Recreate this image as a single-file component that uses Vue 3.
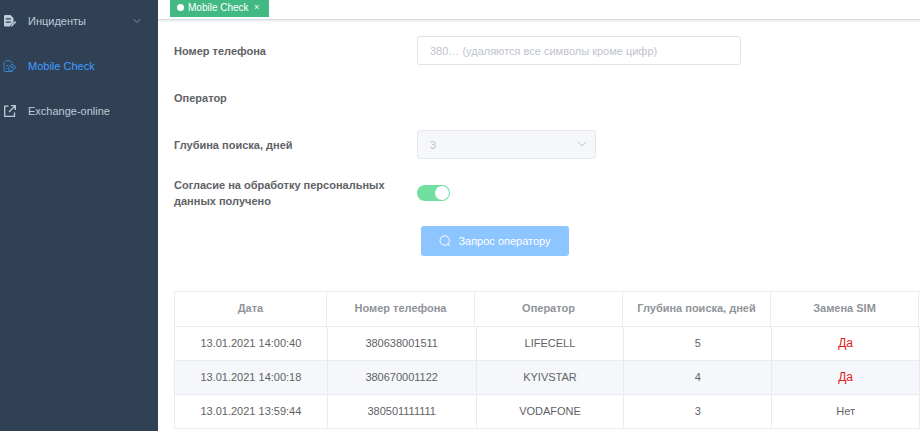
<script setup>
import { ref } from 'vue'

const phone = ref('')
const depth = ref('3')
const consent = ref(true)

const columns = ['Дата', 'Номер телефона', 'Оператор', 'Глубина поиска, дней', 'Замена SIM']
const rows = [
  { date: '13.01.2021 14:00:40', phone: '380638001511', operator: 'LIFECELL', depth: 5, replaced: true },
  { date: '13.01.2021 14:00:18', phone: '380670001122', operator: 'KYIVSTAR', depth: 4, replaced: true },
  { date: '13.01.2021 13:59:44', phone: '380501111111', operator: 'VODAFONE', depth: 3, replaced: false },
]
</script>

<template>
  <div class="layout">
    <nav class="sidebar">
      <a class="item" href="#incidents">
        <svg class="icon" viewBox="0 0 14 14">
          <path fill="currentColor" fill-rule="evenodd" d="M2 1h5.500L10.500 4v4.200L7 11.700V12.500H2a1 1 0 0 1-1-1V2a1 1 0 0 1 1-1zM2.800 4.300v1.200h5V4.300zM2.800 7.600v1.200h5V7.600z" />
          <path fill="none" stroke="currentColor" stroke-width="1.500" d="M8 12.300l4.700-4.700" />
        </svg>
        <span>Инциденты</span>
        <svg class="arrow" viewBox="0 0 8 8">
          <path fill="none" stroke="currentColor" d="M.7 2.200L4 5.500l3.300-3.300" />
        </svg>
      </a>
      <a class="item active" href="#mobile-check">
        <svg class="icon" viewBox="0 0 14 14" fill="none" stroke="currentColor">
          <path d="M9.500 4.500L7 1.700H3L1 3.700v7.800a1 1 0 0 0 1 1h7.500M3 6.500h2.500M3 9.500h1.500" />
          <path d="M5.500 8.500L9 5l4 3.300-3.800 3.400-3.200.2zM7.600 6.700l3.200 3.200M7.500 9.500l2-2" />
        </svg>
        <span>Mobile Check</span>
      </a>
      <a class="item" href="#exchange-online">
        <svg class="icon" viewBox="0 0 14 14" fill="none" stroke="currentColor" stroke-width="1.300">
          <path d="M5.500 2.200H1.700v10.100h9.800V8.500M8 1.700h4.300V6M12 2L6 8" />
        </svg>
        <span>Exchange-online</span>
      </a>
    </nav>

    <div class="content">
      <header class="tabs">
        <div class="tab">
          <i class="dot"></i>
          <a href="#mobile-check">Mobile Check</a>
          <button class="close" type="button">×</button>
        </div>
      </header>

      <main class="page">
        <form @submit.prevent>
          <div class="fields">
            <label for="phone">Номер телефона</label>
            <input id="phone" v-model="phone" class="control" type="text" placeholder="380… (удаляются все символы кроме цифр)" />

            <span class="label">Оператор</span>
            <span></span>

            <label for="depth">Глубина поиска, дней</label>
            <div class="select">
              <select id="depth" v-model="depth" class="control" disabled>
                <option>3</option>
              </select>
              <svg class="caret" viewBox="0 0 10 10">
                <path fill="none" stroke="currentColor" d="M1 3l4 4 4-4" />
              </svg>
            </div>

            <label for="consent">Согласие на обработку персональных данных получено</label>
            <input id="consent" v-model="consent" class="switch" type="checkbox" />
          </div>

          <div class="actions">
            <button class="submit" type="submit" disabled>
              <svg viewBox="0 0 12 12" fill="none" stroke="currentColor">
                <circle cx="5.700" cy="5.500" r="4.700" />
                <path d="M9 9l2 2.200" />
              </svg>
              <span>Запрос оператору</span>
            </button>
          </div>
        </form>

        <table>
          <thead>
            <tr>
              <th v-for="name in columns" :key="name" scope="col">{{ name }}</th>
            </tr>
          </thead>
          <tbody>
            <tr v-for="row in rows" :key="row.date">
              <td>{{ row.date }}</td>
              <td>{{ row.phone }}</td>
              <td>{{ row.operator }}</td>
              <td>{{ row.depth }}</td>
              <td :class="{ alert: row.replaced }">{{ row.replaced ? 'Да' : 'Нет' }}</td>
            </tr>
          </tbody>
        </table>
      </main>
    </div>
  </div>
</template>

<style>
body {
  margin: 0;
  background: #fff;
}
</style>

<style scoped>
.layout,
.layout * {
  box-sizing: border-box;
}

.layout {
  display: flex;
  min-height: 100vh;
  font-family: "Liberation Sans", Arial, sans-serif;
  font-size: 11px;
  color: #606266;
}

input,
select,
button {
  font: inherit;
}

.sidebar {
  display: flex;
  flex-direction: column;
  flex: 0 0 158px;
  gap: 30px;
  padding: 13px 17px 0 3px;
  background: #304156;
}

.item {
  display: flex;
  align-items: center;
  height: 15px;
  font-size: 11px;
  color: #bfcbd9;
  text-decoration: none;
}

.item.active {
  color: #409eff;
}

.icon {
  width: 14px;
  height: 14px;
  margin-right: 11px;
}

.active .icon {
  opacity: 0.7;
}

.arrow {
  width: 8px;
  height: 8px;
  margin-left: auto;
  color: #8290a0;
}

.content {
  flex: 1;
  min-width: 0;
}

.tabs {
  height: 20px;
  padding-left: 12px;
  border-bottom: 1px solid #d8dce5;
  box-shadow: 0 1px 2px rgba(0, 0, 0, 0.1);
}

.tab {
  display: inline-flex;
  align-items: center;
  height: 17px;
  padding: 0 7px 3px;
  background: #42b983;
  color: #fff;
  vertical-align: top;
}

.tab a {
  color: inherit;
  font-size: 10px;
  text-decoration: none;
}

.dot {
  width: 7px;
  height: 7px;
  margin-right: 4px;
  border-radius: 50%;
  background: #fff;
}

.close {
  width: 10px;
  margin-left: 3px;
  padding: 0;
  border: 0;
  background: none;
  color: inherit;
  font-size: 9px;
  line-height: 12px;
}

.page {
  padding: 16px 0 0 16px;
}

.fields {
  display: grid;
  grid-template-columns: 227px minmax(0, 324px);
  grid-auto-rows: minmax(29px, auto);
  gap: 18px 16px;
  align-items: center;
}

label,
.label {
  font-size: 11px;
  font-weight: bold;
  line-height: 16px;
}

.control {
  display: block;
  width: 100%;
  height: 29px;
  padding: 0 12px;
  border: 1px solid #e0e3ea;
  border-radius: 3px;
  background: #fff;
  color: #606266;
  outline: none;
}

.control::placeholder {
  color: #c0c4cc;
  opacity: 1;
}

.select {
  position: relative;
  max-width: 179px;
}

.select .control {
  appearance: none;
  background: #f5f7fa;
  border-color: #e4e7ed;
  color: #c0c4cc;
  opacity: 1;
}

.caret {
  position: absolute;
  top: 9px;
  right: 9px;
  width: 10px;
  height: 10px;
  color: #c0c4cc;
  pointer-events: none;
}

.switch {
  display: flex;
  align-items: center;
  justify-content: flex-end;
  appearance: none;
  width: 33px;
  height: 16px;
  margin: 0;
  padding: 0 1px;
  border-radius: 8px;
  background: #dcdfe6;
}

.switch:checked {
  background: #71dfa0;
}

.switch:not(:checked) {
  justify-content: flex-start;
}

.switch::before {
  content: "";
  width: 14px;
  height: 14px;
  border-radius: 50%;
  background: #fff;
}

.actions {
  margin-top: 17px;
  padding-left: 247px;
}

.submit {
  display: flex;
  align-items: center;
  justify-content: center;
  gap: 7px;
  width: 148px;
  height: 30px;
  padding: 0;
  border: 0;
  border-radius: 3px;
  background: #8cc5ff;
  color: #fff;
}

.submit svg {
  width: 12px;
  height: 12px;
}

table {
  display: block;
  margin-top: 35px;
  border: 1px solid #e8ebf1;
  border-width: 1px 0 0 1px;
}

thead,
tbody {
  display: block;
}

tr {
  display: grid;
  grid-template-columns: 153fr 149fr 148fr 148fr 148fr;
}

thead tr {
  grid-template-columns: 152fr 148fr 148fr 148fr 148fr 1px;
  color: #909399;
  border-bottom: 1px solid #e8ebf1;
}

tbody tr:nth-child(even) {
  background: #f5f7fa;
}

th,
td {
  height: 34px;
  padding: 0;
  border-right: 1px solid #e8ebf1;
  line-height: 33px;
  text-align: center;
  white-space: nowrap;
}

td {
  border-bottom: 1px solid #e8ebf1;
}

.alert {
  color: #e02020;
  font-size: 12px;
}
</style>
